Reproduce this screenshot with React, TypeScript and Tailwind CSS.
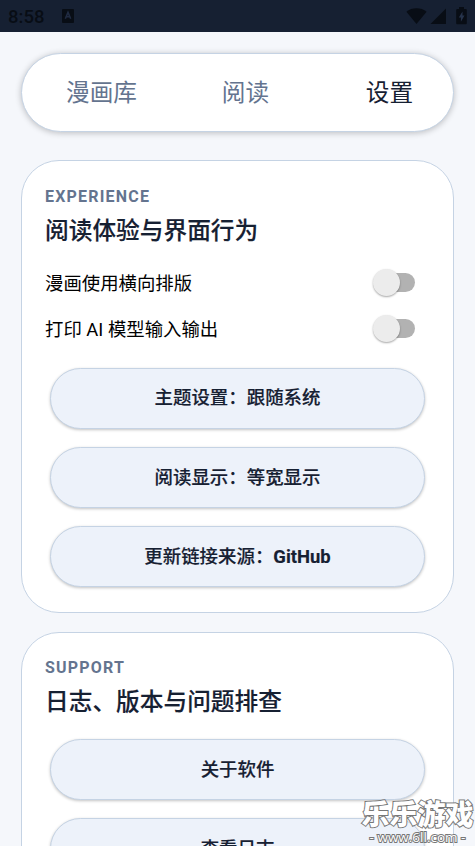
import type { ReactNode } from 'react'
import { clsx } from 'clsx'

const tabs = ['漫画库', '阅读', '设置']

const StatusBar = () => (
  <header className="flex h-8 shrink-0 items-center justify-between bg-[#162032] pl-2 pr-[8px] text-[#080d15]">
    <div className="flex items-center gap-[18px]">
      <span className="pt-px text-[18.5px] leading-8 font-medium">8:58</span>
      <svg width="12" height="14" viewBox="0 0 12 14">
        <rect width="12" height="14" rx="1" fill="currentColor" />
        <path d="M3.3 9.8 6 3.4l2.7 6.4M4.3 7.8h3.4" fill="none" stroke="#202b42" strokeWidth="1.6" />
      </svg>
    </div>
    <div className="flex items-center">
      {/* wifi */}
      <svg width="21" height="16" viewBox="0 0 21 16" fill="currentColor">
        <path d="M0.4 3.7C6-0.9 15-0.9 20.6 3.7L10.5 15.9z" />
      </svg>
      {/* signal */}
      <svg className="ml-[3px]" width="16" height="16" viewBox="0 0 16 16" fill="currentColor">
        <path d="M16 0.5V16H0.5z" />
      </svg>
      {/* battery */}
      <svg className="ml-[10px]" width="11" height="18" viewBox="0 0 11 18" fill="currentColor">
        <path d="M3 0h5v2h1.8q1 0 1 1v13.3q0 1-1 1H1.2q-1 0-1-1V3q0-1 1-1H3z" />
        <path d="M6.5 4.5 2.8 10.6h2.1v4.2l3.6-6.2H6.5z" fill="#26334b" />
      </svg>
    </div>
  </header>
)

const Switch = ({ label }: { label: string }) => (
  <div className="flex h-[46.4px] items-center justify-between pr-[38px] text-[18.4px] text-black">
    <span className="pt-[3px]">{label}</span>
    <span className="flex h-7 w-[42px] items-center">
      <span className="ml-[5px] h-[19px] w-[37px] shrink-0 rounded-full bg-[#b2b2b2]" />
      <span className="-ml-[42px] h-[27px] w-[27px] shrink-0 rounded-full bg-[#ececec] shadow-[0_1px_2px_rgba(0,0,0,0.35)]" />
    </span>
  </div>
)

const PillButton = ({ children }: { children: ReactNode }) => (
  <button className="flex h-[61px] w-[375px] shrink-0 items-center justify-center rounded-full border border-[#c5d3e4] bg-[#edf2fa] pt-[2px] text-[18.45px] font-medium whitespace-pre text-[#162032] shadow-[0_1px_3px_rgba(0,0,0,0.24)] [-webkit-text-stroke:0.15px_#162032]">
    {children}
  </button>
)

const Heading = ({ eyebrow, title }: { eyebrow: string; title: string }) => (
  <>
    <p className="text-[16px] leading-[20px] font-bold tracking-[1.2px] text-[#64748f]">{eyebrow}</p>
    <h2 className="mt-[7px] text-[23.7px] leading-[34px] font-medium text-[#162032] [-webkit-text-stroke:0.15px_#162032]">
      {title}
    </h2>
  </>
)

const App = () => (
  <div className="relative flex h-[846px] w-[475px] flex-col overflow-hidden bg-[#f5f7fb] font-[Roboto,'Noto_Sans_CJK_SC',sans-serif]">
    <StatusBar />

    <nav className="mx-[21px] mt-[21px] grid h-[79px] shrink-0 grid-cols-[144px_144px_144px] items-center rounded-full border border-[#c5d3e4] bg-white pt-[3px] pl-[7.5px] text-center text-[23.65px] shadow-[0_1px_6px_rgba(0,0,0,0.24)]">
      {tabs.map((tab) => (
        <span key={tab} className={clsx(tab === '设置' ? 'text-[#162032]' : 'text-[#64748f]')}>
          {tab}
        </span>
      ))}
    </nav>

    <main className="flex flex-col px-[21px] pt-[28px]">
      <section className="h-[453px] shrink-0 rounded-[38px] border border-[#c5d3e4] bg-white pt-[26px] pl-[23px]">
        <Heading eyebrow="EXPERIENCE" title="阅读体验与界面行为" />
        <div className="mt-[11px]">
          <Switch label="漫画使用横向排版" />
          <Switch label="打印 AI 模型输入输出" />
        </div>
        <div className="mt-[16px] ml-[5px] flex flex-col gap-[18.3px]">
          <PillButton>主题设置：跟随系统</PillButton>
          <PillButton>阅读显示：等宽显示</PillButton>
          <PillButton>
            更新链接来源：<span className="font-bold">GitHub</span>
          </PillButton>
        </div>
      </section>

      <section className="mt-[19px] h-[453px] shrink-0 rounded-[38px] border border-[#c5d3e4] bg-white pt-[25px] pl-[23px]">
        <Heading eyebrow="SUPPORT" title="日志、版本与问题排查" />
        <div className="mt-[20px] ml-[5px] flex flex-col gap-[18.3px]">
          <PillButton>关于软件</PillButton>
          <PillButton>查看日志</PillButton>
        </div>
      </section>
    </main>

    {/* site mark over the bottom right corner */}
    <div className="absolute top-[800px] left-[361px] flex w-[113px] flex-col items-center whitespace-nowrap text-white [paint-order:stroke_fill]">
      <span className="text-[28px] leading-[31px] font-black [-webkit-text-stroke:2px_#777]">乐乐游戏</span>
      <span className="text-[13.5px] leading-[12px] font-[Open_Sans,sans-serif] [-webkit-text-stroke:2px_#777]">- www.6ll.com -</span>
    </div>
  </div>
)

export default App
